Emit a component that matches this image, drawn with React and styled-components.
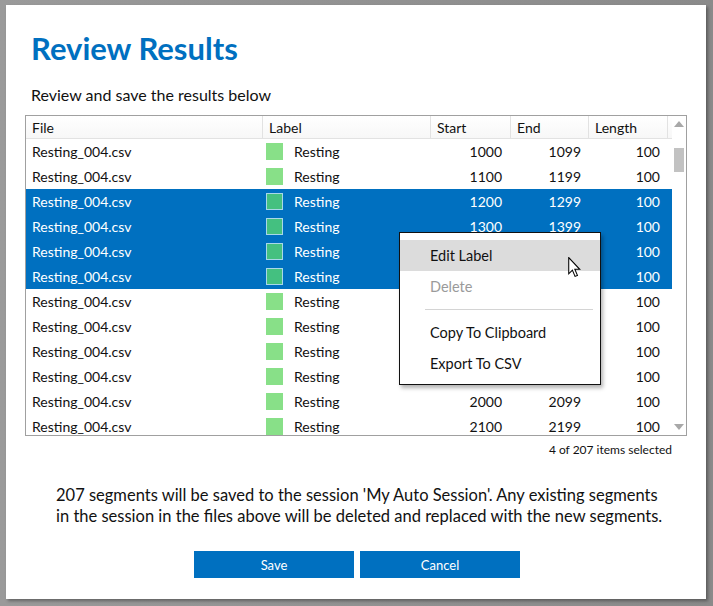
import React from "react";
import styled, { createGlobalStyle } from "styled-components";

const GlobalStyle = createGlobalStyle`
  html, body {
    margin: 0;
    padding: 0;
    background: #8c8c8c;
    font-family: Lato, "Open Sans", "Liberation Sans", sans-serif;
  }
`;

const rows = [
  [1000, 1099, false],
  [1100, 1199, false],
  [1200, 1299, true],
  [1300, 1399, true],
  [1400, 1499, true],
  [1500, 1599, true],
  [1600, 1699, false],
  [1700, 1799, false],
  [1800, 1899, false],
  [1900, 1999, false],
  [2000, 2099, false],
  [2100, 2199, false],
];

const cols = "237px 168px 80px 78px 79px";

const App = () => {
  return (
    <Desktop>
      <GlobalStyle />
      <Window>
        <Title>Review Results</Title>
        <Subtitle>Review and save the results below</Subtitle>
        <TableBox>
          <TableBody>
            <HeaderRow>
              <HeadCell>File</HeadCell>
              <HeadCell>Label</HeadCell>
              <HeadCell>Start</HeadCell>
              <HeadCell>End</HeadCell>
              <HeadCell>Length</HeadCell>
            </HeaderRow>
            {rows.map(([start, end, sel], i) => (
              <Row key={i} selected={sel}>
                <FileCell>Resting_004.csv</FileCell>
                <LabelCell>
                  <Swatch selected={sel} />
                  Resting
                </LabelCell>
                <NumCell pad={9}>{start}</NumCell>
                <NumCell pad={8}>{end}</NumCell>
                <NumCell pad={8}>100</NumCell>
              </Row>
            ))}
          </TableBody>
          <ScrollBar>
            <Arrow viewBox="0 0 10 6">
              <path d="M0 6 L5 0 L10 6 Z" fill="#a8a8a8" />
            </Arrow>
            <Track>
              <Thumb />
            </Track>
            <Arrow viewBox="0 0 10 6">
              <path d="M0 0 L5 6 L10 0 Z" fill="#a8a8a8" />
            </Arrow>
          </ScrollBar>

          <Menu>
            <MenuItem active>Edit Label</MenuItem>
            <MenuItem disabled>Delete</MenuItem>
            <Separator />
            <MenuItem>Copy To Clipboard</MenuItem>
            <MenuItem>Export To CSV</MenuItem>
          </Menu>
          <Cursor viewBox="0 0 12 20">
            <path
              d="M0.5 0.5 L0.5 16 L4 12.5 L6.5 18.5 L8.8 17.5 L6.3 11.7 L11 11.7 Z"
              fill="#fff"
              stroke="#000"
              strokeWidth="1"
              strokeLinejoin="miter"
            />
          </Cursor>
        </TableBox>
        <Status>4 of 207 items selected</Status>
        <Message>
          207 segments will be saved to the session 'My Auto Session'. Any existing segments
          in the session in the files above will be deleted and replaced with the new segments.
        </Message>
        <Buttons>
          <Button>Save</Button>
          <Button>Cancel</Button>
        </Buttons>
      </Window>
    </Desktop>
  );
};

const Desktop = styled.div`
  width: 713px;
  height: 606px;
  padding: 5px 7px 7px 6px;
  box-sizing: border-box;
  background: linear-gradient(to right, #9a9a9a, #8a8a8a);
`;

const Window = styled.div`
  height: 100%;
  background: #fff;
  box-shadow: 2px 2px 3px rgba(0, 0, 0, 0.35);
  padding: 25px 19px 0 19px;
  box-sizing: border-box;
  display: flex;
  flex-direction: column;
`;

const Title = styled.div`
  color: #0070c0;
  font-size: 31px;
  font-weight: 700;
  line-height: 36px;
  padding-left: 6px;
`;

const Subtitle = styled.div`
  margin-top: 19px;
  font-size: 16px;
  line-height: 20px;
  color: #111;
  padding-left: 6px;
`;

const TableBox = styled.div`
  position: relative;
  margin-top: 10px;
  height: 321px;
  border: 1px solid #a0a0a0;
  box-sizing: border-box;
  display: flex;
  overflow: visible;
`;

const TableBody = styled.div`
  width: 646px;
  overflow: hidden;
  font-size: 14px;
  color: #111;
`;

const HeaderRow = styled.div`
  display: grid;
  grid-template-columns: ${cols} 4px;
  height: 22px;
  background: linear-gradient(#fff, #f7f7f7);
  border-bottom: 1px solid #e2e2e2;
`;

const HeadCell = styled.div`
  display: flex;
  align-items: center;
  padding-left: 6px;
  border-right: 1px solid #e2e2e2;
  font-size: 14px;
`;

const Row = styled.div`
  display: grid;
  grid-template-columns: ${cols};
  height: 25px;
  align-items: center;
  background: ${(p) => (p.selected ? "#0070c0" : "#fff")};
  color: ${(p) => (p.selected ? "#fff" : "#111")};
`;

const FileCell = styled.div`
  padding-left: 6px;
`;

const LabelCell = styled.div`
  display: flex;
  align-items: center;
  gap: 11px;
  padding-left: 3px;
`;

const Swatch = styled.span`
  width: 17px;
  height: 17px;
  box-sizing: border-box;
  background: ${(p) => (p.selected ? "#44c080" : "#88e088")};
  border: ${(p) => (p.selected ? "1px solid #a8d8e8" : "none")};
`;

const NumCell = styled.div`
  text-align: right;
  padding-right: ${(p) => p.pad}px;
`;

const ScrollBar = styled.div`
  flex: 1;
  display: flex;
  flex-direction: column;
  align-items: center;
  padding: 5px 0;
`;

const Arrow = styled.svg`
  width: 10px;
  height: 6px;
`;

const Track = styled.div`
  flex: 1;
  width: 100%;
  padding: 21px 2px 0;
  box-sizing: border-box;
`;

const Thumb = styled.div`
  height: 24px;
  background: #c2c2c2;
`;

const Menu = styled.div`
  position: absolute;
  left: 373px;
  top: 116px;
  width: 202px;
  padding: 7px 0 5px;
  box-sizing: border-box;
  background: #fff;
  border: 1px solid #111;
  box-shadow: 2px 3px 4px rgba(0, 0, 0, 0.3);
  font-size: 14.5px;
`;

const MenuItem = styled.div`
  height: 31px;
  line-height: 31px;
  padding-left: 30px;
  color: ${(p) => (p.disabled ? "#9a9a9a" : "#111")};
  background: ${(p) => (p.active ? "#dcdcdc" : "transparent")};
`;

const Separator = styled.div`
  height: 1px;
  background: #d4d4d4;
  margin: 7px 7px 7px 25px;
`;

const Cursor = styled.svg`
  position: absolute;
  left: 542px;
  top: 141px;
  width: 13px;
  height: 21px;
`;

const Status = styled.div`
  margin-top: 6px;
  text-align: right;
  padding-right: 15px;
  font-size: 12px;
  color: #111;
`;

const Message = styled.div`
  margin-top: 28px;
  padding: 0 22px 0 31px;
  font-size: 16.5px;
  line-height: 21px;
  color: #111;
`;

const Buttons = styled.div`
  margin-top: 24px;
  display: flex;
  justify-content: center;
  gap: 6px;
  padding-left: 2px;
`;

const Button = styled.button`
  width: 160px;
  height: 27px;
  border: none;
  background: #0070c0;
  color: #fff;
  font-family: inherit;
  font-size: 13px;
`;

export default App;
